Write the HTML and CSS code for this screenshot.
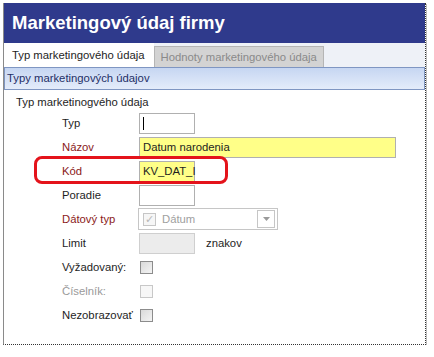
FILE: index.html
```html
<!DOCTYPE html>
<html lang="sk">
<head>
 <meta charset="UTF-8">
 <title>Marketingový údaj firmy</title>
 <link rel="stylesheet" href="styles.css">
</head>
<body>
 <div class="frame">
 <div class="header">Marketingový údaj firmy</div>
 <div class="tabs">
 <div class="tab active">Typ marketingového údaja</div>
 <div class="tab">Hodnoty marketingového údaja</div>
 </div>
 <div class="section">Typy marketingových údajov</div>
 <div class="content">
 <div class="group">Typ marketinogvého údaja</div>
 <div class="form">
 <label>Typ</label>
 <div><span class="box short"><span class="caret"></span></span></div>
 <label class="req">Názov</label>
 <div><span class="box long yellow">Datum narodenia</span></div>
 <label class="req">Kód</label>
 <div><span class="box short yellow">KV_DAT_I</span></div>
 <label>Poradie</label>
 <div><span class="box short"></span></div>
 <label class="req">Dátový typ</label>
 <div>
 <span class="combo">
 <span class="check on">&#10003;</span>
 <span class="combo-text">Dátum</span>
 <span class="arrow"><svg width="7" height="4" viewBox="0 0 7 4"><path d="M0 0h7L3.5 4z" fill="#9a9a9a"/></svg></span>
 </span>
 </div>
 <label>Limit</label>
 <div class="limit"><span class="box short gray"></span><span>znakov</span></div>
 <label>Vyžadovaný:</label>
 <div><span class="check"></span></div>
 <label class="off">Číselník:</label>
 <div><span class="check disabled"></span></div>
 <label>Nezobrazovať</label>
 <div><span class="check"></span></div>
 </div>
 <div class="highlight"></div>
 </div>
 </div>
</body>
</html>
```
FILE: styles.css
```css
body {
margin: 0;
background-color: #fff;
font-family: 'Liberation Sans', Arial, sans-serif;
font-size: 11.3px;
color: #1e1e1e;
}
.frame {
margin: 3px 0 0 3px;
width: 421px;
height: 341px;
border-left: 1px solid #8a8a8a;
border-right: 1px dotted #333;
border-bottom: 1px dotted #333;
box-shadow: 1px 1px 0 #bbb;
background-color: #fff;
}
.header {
background-color: #2f3a8c;
color: #fff;
font-weight: bold;
font-size: 18.5px;
height: 40px;
line-height: 40px;
padding-left: 8px;
}
.tabs {
display: flex;
align-items: flex-end;
height: 24px;
background-color: #eef1f7;
}
.tab {
height: 20px;
line-height: 20px;
padding: 0 6px;
background-color: #d3d3d3;
color: #8a8a8a;
border: 1px solid #b5b5b5;
border-bottom: none;
}
.tab.active {
height: 24px;
line-height: 24px;
background-color: #fff;
color: #1e1e1e;
border: none;
padding: 0 9px 0 8px;
}
.section {
height: 21px;
line-height: 21px;
padding-left: 2px;
border: 1px solid #7f96c2;
background: linear-gradient(#c6d6f2, #e4ecfa);
color: #1f2f66;
}
.content {
position: relative;
padding: 5px 0 0 12px;
}
.group {
line-height: 14px;
margin-bottom: 2px;
}
.form {
display: grid;
grid-template-columns: 77px 1fr;
grid-auto-rows: 24px;
padding-left: 46px;
align-items: center;
}
.form label.req {
color: #8b1a1a;
}
.form label.off {
color: #9a9a9a;
}
.box {
display: inline-block;
box-sizing: border-box;
height: 21px;
line-height: 19px;
padding-left: 3px;
border: 1px solid #b0b0b0;
background-color: #fff;
vertical-align: middle;
}
.short { width: 56px; }
.long { width: 257px; }
.yellow { background-color: #ffff88; }
.gray { background-color: #ececec; border-color: #cfcfcf; }
.caret {
display: inline-block;
width: 1px;
height: 13px;
background-color: #000;
vertical-align: middle;
}
.combo {
display: inline-flex;
align-items: center;
box-sizing: border-box;
width: 140px;
height: 22px;
margin-left: -1px;
border: 1px solid #c6c6c6;
color: #a0a0a0;
}
.combo .check {
margin: 0 6px 0 4px;
font-size: 11px;
line-height: 11px;
text-align: center;
color: #b8b8b8;
}
.combo-text {
flex: 1;
}
.arrow {
display: flex;
align-items: center;
justify-content: center;
width: 16px;
height: 16px;
margin-right: 2px;
border: 1px solid #c6c6c6;
}
.limit {
display: flex;
align-items: center;
gap: 11px;
}
.check {
display: inline-block;
box-sizing: border-box;
width: 13px;
height: 13px;
margin-left: 1px;
border: 1px solid #8c8c8c;
background: linear-gradient(135deg, #d9d9d9, #f4f4f4);
vertical-align: middle;
}
.check.disabled {
border-color: #c8c8c8;
background: #f7f7f7;
}
.check.on {
border-color: #c6c6c6;
background: #f6f6f6;
}
.highlight {
position: absolute;
left: 30px;
top: 66px;
width: 188px;
height: 22px;
border: 3px solid #e4131b;
border-radius: 8px;
}
```
